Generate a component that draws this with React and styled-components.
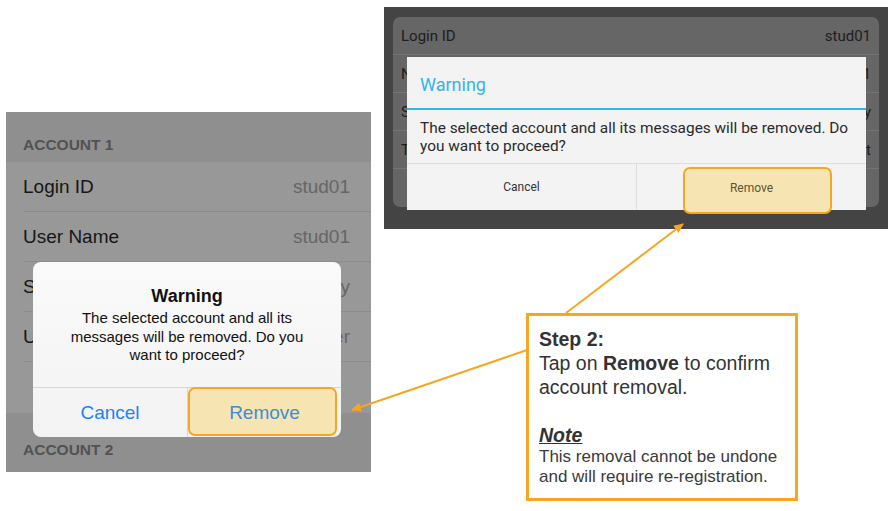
import React from 'react'
import styled, {createGlobalStyle} from 'styled-components'

const ORANGE = '#f5a623'

const Global = createGlobalStyle`
body{
    margin: 0;
    background: #ffffff;
    font-family: "Liberation Sans", Arial, sans-serif;
}
`

const iosRows = [
  {label: 'Login ID', value: 'stud01'},
  {label: 'User Name', value: 'stud01'},
  {label: 'Server', value: 'Primary'},
  {label: 'User Type', value: 'Teacher'},
]

const droidRows = [
  {label: 'Login ID', value: 'stud01'},
  {label: 'Name', value: 'stud01'},
  {label: 'Server', value: 'Primary'},
  {label: 'Type', value: 'Student'},
  {label: '', value: ''},
]

const App = () => {
  return (
    <>
      <Global/>
      <Canvas>
        <LeftCol>
          <IosScreen>
            <SectionHeader>ACCOUNT 1</SectionHeader>
            {iosRows.map(r => (
              <IosRow key={r.label}>
                <span>{r.label}</span>
                <IosValue>{r.value}</IosValue>
              </IosRow>
            ))}
            <IosRow $last/>
            <SectionHeader $tall>ACCOUNT 2</SectionHeader>

            <IosAlert>
              <IosAlertBody>
                <IosTitle>Warning</IosTitle>
                <IosMessage>
                  The selected account and all its<br/>
                  messages will be removed. Do you<br/>
                  want to proceed?
                </IosMessage>
              </IosAlertBody>
              <IosButtons>
                <IosButton $divider>Cancel</IosButton>
                <IosButton $marked>Remove</IosButton>
              </IosButtons>
              <Highlight $left={155} $top={125} $w={149} $h={49}/>
            </IosAlert>
          </IosScreen>
        </LeftCol>

        <RightCol>
          <DroidFrame>
            <DroidCard>
              {droidRows.map((r, i) => (
                <DroidRow key={i} $last={i === droidRows.length - 1}>
                  <span>{r.label}</span>
                  <span>{r.value}</span>
                </DroidRow>
              ))}
            </DroidCard>

            <DroidDialog>
              <DroidTitle>Warning</DroidTitle>
              <DroidMessage>
                The selected account and all its messages will be removed. Do<br/>
                you want to proceed?
              </DroidMessage>
              <DroidButtons>
                <DroidButton $divider>Cancel</DroidButton>
                <DroidButton $marked>Remove</DroidButton>
              </DroidButtons>
              <Highlight $left={276} $top={110} $w={149} $h={47}/>
            </DroidDialog>
          </DroidFrame>

          <StepBox>
            <StepText>
              <b>Step 2:</b><br/>
              Tap on <b>Remove</b> to confirm<br/>
              account removal.
            </StepText>
            <StepText>&nbsp;</StepText>
            <NoteTitle>Note</NoteTitle>
            <NoteText>
              This removal cannot be undone<br/>
              and will require re-registration.
            </NoteText>
          </StepBox>
        </RightCol>

        <Arrows viewBox="0 0 892 511" width="892" height="511">
          <defs>
            <marker id="head" markerWidth="11" markerHeight="10" refX="9" refY="5" orient="auto" markerUnits="userSpaceOnUse">
              <path d="M0,0.5 L10,5 L0,9.5 Z" fill={ORANGE}/>
            </marker>
          </defs>
          <line x1="566" y1="313" x2="683" y2="224" stroke={ORANGE} strokeWidth="2" markerEnd="url(#head)"/>
          <line x1="527" y1="350" x2="352" y2="410" stroke={ORANGE} strokeWidth="2" markerEnd="url(#head)"/>
        </Arrows>
      </Canvas>
    </>
  )
}

export default App


const Canvas = styled.div`
position: relative;
width: 892px;
height: 511px;
overflow: hidden;
display: flex;
align-items: flex-start;
`
const LeftCol = styled.div`
padding: 112px 0 0 6px;
`
const RightCol = styled.div`
margin-left: 13px;
padding-top: 7px;
display: flex;
flex-direction: column;
`
const IosScreen = styled.div`
position: relative;
width: 365px;
background: #989898;
`
const SectionHeader = styled.div`
height: ${p => p.$tall ? '59px' : '50px'};
box-sizing: border-box;
padding: ${p => p.$tall ? '28px' : '24px'} 0 0 17px;
background: #8f8f8f;
color: #525252;
font-size: 15.5px;
font-weight: bold;
line-height: 18px;
`
const IosRow = styled.div`
height: ${p => p.$last ? '51px' : '50px'};
box-sizing: border-box;
margin-left: 17px;
padding-right: 21px;
border-bottom: ${p => p.$last ? 'none' : '1px solid #8c8c8c'};
display: flex;
justify-content: space-between;
align-items: center;
font-size: 19px;
color: #161616;
`
const IosValue = styled.span`
color: #666666;
`
const IosAlert = styled.div`
position: absolute;
left: 27px;
top: 150px;
width: 308px;
height: 175px;
border-radius: 8px;
overflow: hidden;
background: linear-gradient(#fafafa, #f3f3f3);
display: flex;
flex-direction: column;
`
const IosAlertBody = styled.div`
height: 125px;
box-sizing: border-box;
padding-top: 23px;
text-align: center;
color: #111;
`
const IosTitle = styled.div`
font-size: 18px;
font-weight: bold;
line-height: 22px;
`
const IosMessage = styled.div`
margin-top: 2px;
font-size: 15px;
line-height: 18.5px;
`
const IosButtons = styled.div`
flex: 1;
display: flex;
border-top: 1px solid #d6d6d6;
`
const IosButton = styled.div`
position: relative;
z-index: 1;
width: ${p => p.$divider ? '155px' : 'auto'};
flex: ${p => p.$divider ? 'none' : '1'};
box-sizing: border-box;
border-right: ${p => p.$divider ? '1px solid #d6d6d6' : 'none'};
display: flex;
align-items: center;
justify-content: center;
font-size: 19px;
color: ${p => p.$marked ? '#3d8cdc' : '#1c82fa'};
`
const Highlight = styled.div`
position: absolute;
z-index: 0;
left: ${p => p.$left}px;
top: ${p => p.$top}px;
width: ${p => p.$w}px;
height: ${p => p.$h}px;
box-sizing: border-box;
border: 2.5px solid ${ORANGE};
border-radius: 7px;
background: #f6e5b2;
`
const DroidFrame = styled.div`
position: relative;
width: 504px;
height: 222px;
box-sizing: border-box;
padding: 10px 9px 22px 9px;
background: #444444;
font-family: Roboto, "Liberation Sans", sans-serif;
`
const DroidCard = styled.div`
height: 100%;
border-radius: 7px;
overflow: hidden;
background: #666666;
`
const DroidRow = styled.div`
height: 38px;
box-sizing: border-box;
padding: 0 8px;
border-bottom: ${p => p.$last ? 'none' : '1px solid #747474'};
display: flex;
justify-content: space-between;
align-items: center;
font-size: 15px;
color: #1d1d1d;
`
const DroidDialog = styled.div`
position: absolute;
left: 23px;
top: 50px;
width: 459px;
height: 153px;
background: #f3f3f3;
display: flex;
flex-direction: column;
`
const DroidTitle = styled.div`
height: 53px;
box-sizing: border-box;
padding: 4px 0 0 13px;
border-bottom: 2px solid #33b5e5;
display: flex;
align-items: center;
font-size: 18px;
color: #33b5e5;
`
const DroidMessage = styled.div`
height: 53px;
box-sizing: border-box;
padding: 9px 13px 0;
font-size: 15.4px;
line-height: 18px;
color: #2a2a2a;
`
const DroidButtons = styled.div`
flex: 1;
display: flex;
border-top: 1px solid #dedede;
`
const DroidButton = styled.div`
position: relative;
z-index: 1;
width: ${p => p.$divider ? '229px' : 'auto'};
flex: ${p => p.$divider ? 'none' : '1'};
border-right: ${p => p.$divider ? '1px solid #dedede' : 'none'};
display: flex;
align-items: center;
justify-content: center;
padding-top: ${p => p.$marked ? '2px' : '0'};
font-size: 12px;
color: ${p => p.$marked ? '#5a5434' : '#333'};
`
const StepBox = styled.div`
margin: 84px 0 0 142px;
width: 272px;
height: 188px;
box-sizing: border-box;
border: 3px solid ${ORANGE};
padding: 11px 10px 0 10px;
color: #333333;
background: #fff;
`
const StepText = styled.div`
font-size: 19.5px;
line-height: 24px;
`
const NoteTitle = styled.div`
font-size: 19.5px;
line-height: 24px;
font-weight: bold;
font-style: italic;
text-decoration: underline;
`
const NoteText = styled.div`
font-size: 17px;
line-height: 20px;
color: #3a3a3a;
`
const Arrows = styled.svg`
position: absolute;
left: 0;
top: 0;
pointer-events: none;
`
